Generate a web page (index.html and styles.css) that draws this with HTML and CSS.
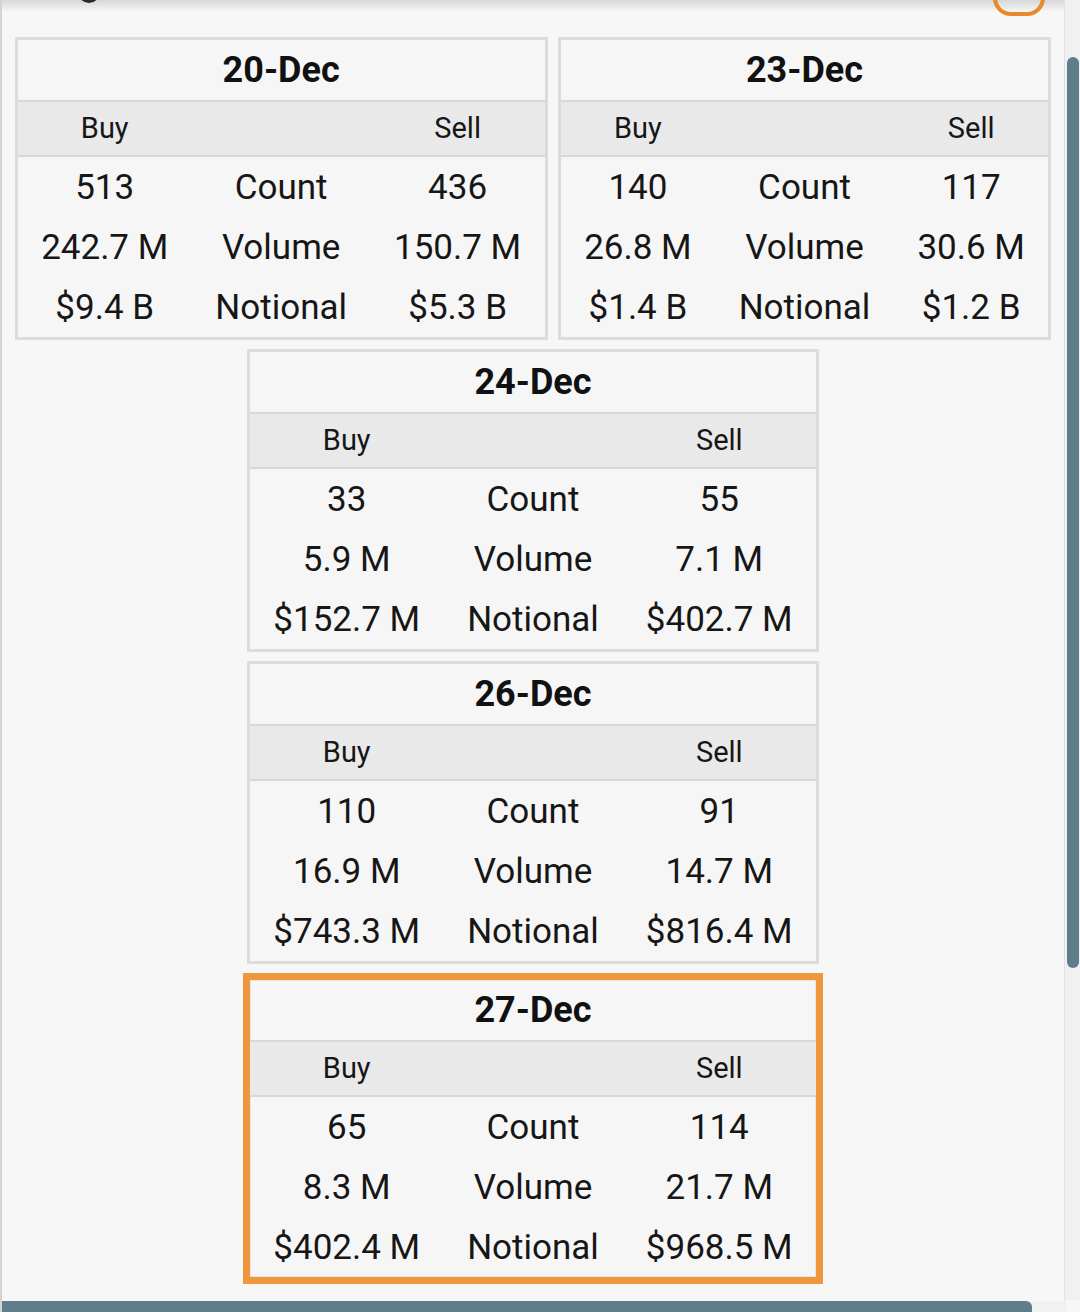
FILE: index.html
```html
<!DOCTYPE html>
<html>
<head>
<meta charset="utf-8">
<link rel="stylesheet" href="styles.css">
</head>
<body>
<div class="screen">
  <div class="topshade"></div>
  <div class="cut-dot"></div>
  <div class="cut-ring"></div>

  <div class="cards">
    <table class="day">
      <tr><th class="title" colspan="3">20-Dec</th></tr>
      <tr class="head"><td>Buy</td><td></td><td>Sell</td></tr>
      <tr><td>513</td><td>Count</td><td>436</td></tr>
      <tr><td>242.7 M</td><td>Volume</td><td>150.7 M</td></tr>
      <tr><td>$9.4 B</td><td>Notional</td><td>$5.3 B</td></tr>
    </table>
    <table class="day">
      <tr><th class="title" colspan="3">23-Dec</th></tr>
      <tr class="head"><td>Buy</td><td></td><td>Sell</td></tr>
      <tr><td>140</td><td>Count</td><td>117</td></tr>
      <tr><td>26.8 M</td><td>Volume</td><td>30.6 M</td></tr>
      <tr><td>$1.4 B</td><td>Notional</td><td>$1.2 B</td></tr>
    </table>
    <table class="day">
      <tr><th class="title" colspan="3">24-Dec</th></tr>
      <tr class="head"><td>Buy</td><td></td><td>Sell</td></tr>
      <tr><td>33</td><td>Count</td><td>55</td></tr>
      <tr><td>5.9 M</td><td>Volume</td><td>7.1 M</td></tr>
      <tr><td>$152.7 M</td><td>Notional</td><td>$402.7 M</td></tr>
    </table>
    <table class="day">
      <tr><th class="title" colspan="3">26-Dec</th></tr>
      <tr class="head"><td>Buy</td><td></td><td>Sell</td></tr>
      <tr><td>110</td><td>Count</td><td>91</td></tr>
      <tr><td>16.9 M</td><td>Volume</td><td>14.7 M</td></tr>
      <tr><td>$743.3 M</td><td>Notional</td><td>$816.4 M</td></tr>
    </table>
    <table class="day active">
      <tr><th class="title" colspan="3">27-Dec</th></tr>
      <tr class="head"><td>Buy</td><td></td><td>Sell</td></tr>
      <tr><td>65</td><td>Count</td><td>114</td></tr>
      <tr><td>8.3 M</td><td>Volume</td><td>21.7 M</td></tr>
      <tr><td>$402.4 M</td><td>Notional</td><td>$968.5 M</td></tr>
    </table>
  </div>

  <div class="vtrack"><div class="vthumb"></div></div>
  <div class="htrack"><div class="hthumb"></div></div>
</div>
</body>
</html>
```

FILE: styles.css
```css
html, body {
  margin: 0;
  padding: 0;
}

body {
  background: #f7f7f7;
  font-family: Roboto, "Noto Sans", "Liberation Sans", sans-serif;
  color: #161616;
}

.screen {
  position: relative;
  width: 1080px;
  height: 1312px;
  overflow: hidden;
  background: #f7f7f7;
  border-left: 2px solid #d4d4d4;
  box-sizing: border-box;
}

.topshade {
  position: absolute;
  left: 0;
  right: 0;
  top: 0;
  height: 12px;
  background: linear-gradient(to bottom, rgba(0, 0, 0, 0.13), rgba(0, 0, 0, 0));
}

.cut-dot {
  position: absolute;
  left: 76px;
  top: -19px;
  width: 22px;
  height: 22px;
  border-radius: 50%;
  background: #2a2a2a;
}

.cut-ring {
  position: absolute;
  left: 991px;
  top: -28px;
  width: 44px;
  height: 36px;
  border: 4px solid #e8892c;
  border-radius: 18px;
}

.cards {
  width: 1062px;
  padding-top: 37px;
  display: flex;
  flex-wrap: wrap;
  justify-content: center;
  align-items: flex-start;
  gap: 9px 10px;
}

.day {
  border-collapse: separate;
  border-spacing: 0;
  border: 3px solid #dcdcdc;
  background: #f6f6f6;
}

.day td,
.day th {
  padding: 0 23.5px;
  text-align: center;
  white-space: nowrap;
}

.day .title {
  height: 60px;
  font-size: 36px;
  line-height: 1;
  font-weight: 700;
  border-bottom: 2px solid #d8d8d8;
  color: #111;
}

.day .head td {
  height: 53px;
  font-size: 29px;
  background: #e9e9e9;
  border-bottom: 2px solid #d8d8d8;
}

.day tr td {
  height: 60px;
  font-size: 35px;
  line-height: 1;
}

.day.active {
  border: 7px solid #f0963c;
  box-shadow: inset 0 0 0 1px #e6e6e6;
}

.vtrack {
  position: absolute;
  right: 0;
  top: 0;
  width: 16px;
  height: 1300px;
  background: #f1f1f1;
  border-left: 1px solid #e0e0e0;
  box-sizing: border-box;
}

.vthumb {
  position: absolute;
  left: 2px;
  top: 57px;
  width: 12px;
  height: 911px;
  background: #607d8b;
  border-radius: 6px;
}

.htrack {
  position: absolute;
  left: 0;
  bottom: 0;
  width: 1064px;
  height: 11px;
  background: #f1f1f1;
}

.hthumb {
  width: 1030px;
  height: 11px;
  background: #607d8b;
  border-radius: 0 6px 0 0;
}
```
